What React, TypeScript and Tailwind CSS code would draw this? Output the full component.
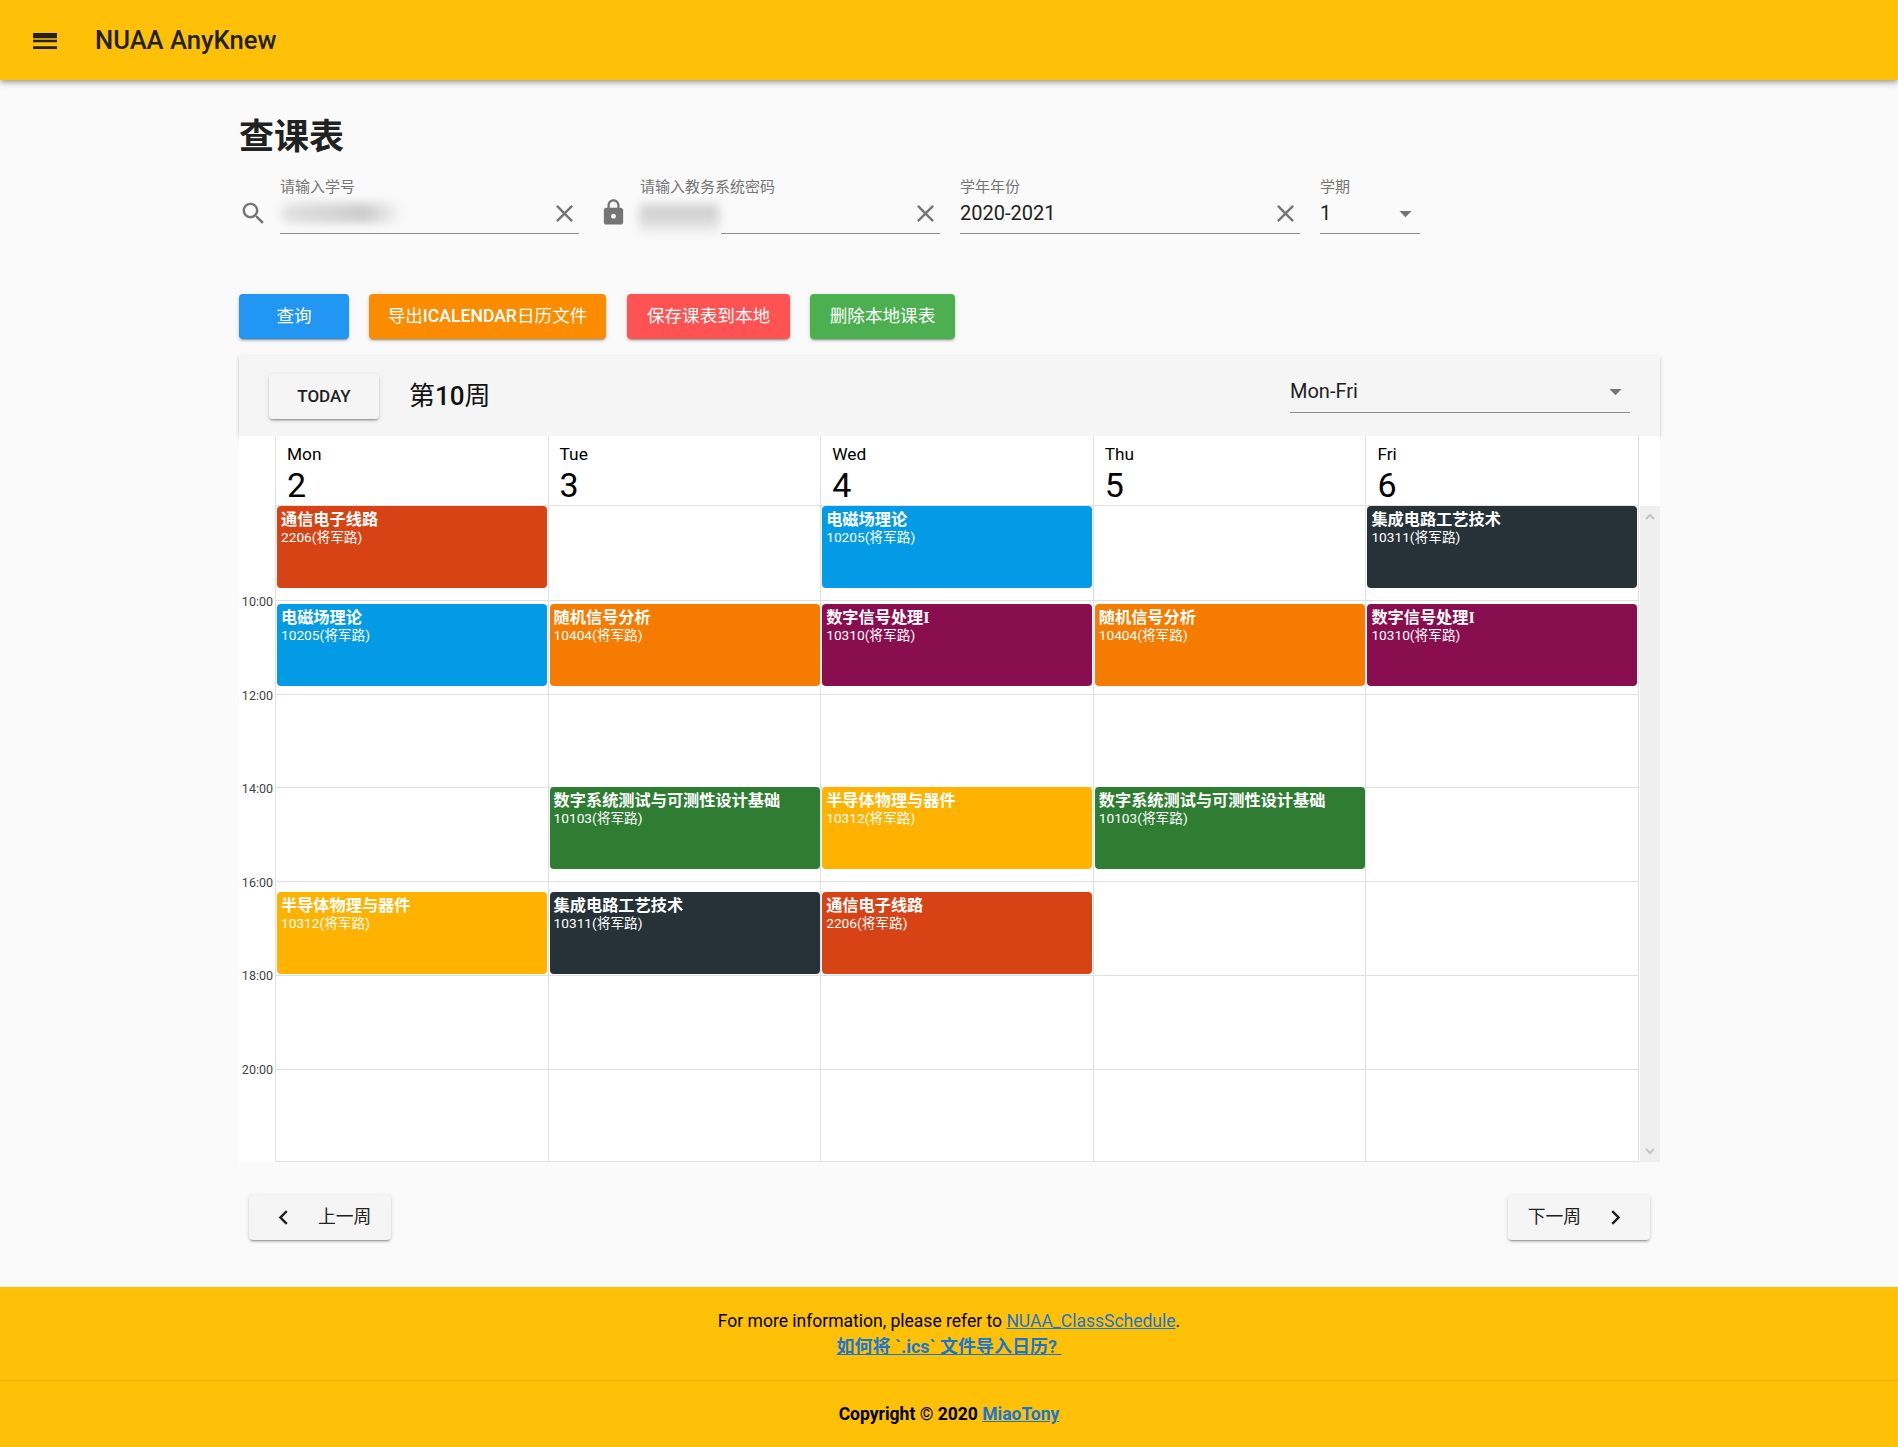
import type { ReactNode } from "react";

interface Course {
  title: string;
  room: string;
  color: string;
}

const red = { title: "通信电子线路", room: "2206(将军路)", color: "bg-[#d84315]" };
const field = { title: "电磁场理论", room: "10205(将军路)", color: "bg-[#039be5]" };
const random = { title: "随机信号分析", room: "10404(将军路)", color: "bg-[#f57c00]" };
const dsp = { title: "数字信号处理I", room: "10310(将军路)", color: "bg-[#880e4f]" };
const test = { title: "数字系统测试与可测性设计基础", room: "10103(将军路)", color: "bg-[#2e7d32]" };
const semi = { title: "半导体物理与器件", room: "10312(将军路)", color: "bg-[#ffb300]" };
const ic = { title: "集成电路工艺技术", room: "10311(将军路)", color: "bg-[#263238]" };

const days: { name: string; date: number; courses: (Course | null)[] }[] = [
  { name: "Mon", date: 2, courses: [red, field, null, null, semi, null, null] },
  { name: "Tue", date: 3, courses: [null, random, null, test, ic, null, null] },
  { name: "Wed", date: 4, courses: [field, dsp, null, semi, red, null, null] },
  { name: "Thu", date: 5, courses: [null, random, null, test, null, null, null] },
  { name: "Fri", date: 6, courses: [ic, dsp, null, null, null, null, null] },
];

// row heights and where the course card starts inside each row
const rows = [
  "h-[95px] pt-0",
  "h-[94px] pt-[3px]",
  "h-[93px] pt-0",
  "h-[94px] pt-0 [&>div]:-translate-y-px",
  "h-[94px] pt-[10px]",
  "h-[94px] pt-0",
  "h-[92px] pt-0",
];
const times = ["10:00", "12:00", "14:00", "16:00", "18:00", "20:00"];

const raised = "shadow-[0_3px_1px_-2px_rgba(0,0,0,0.2),0_2px_2px_0_rgba(0,0,0,0.14),0_1px_5px_0_rgba(0,0,0,0.12)]";

function Icon({ d, className }: { d: string; className: string }) {
  return (
    <svg viewBox="0 0 24 24" className={className} fill="currentColor">
      <path d={d} />
    </svg>
  );
}

const paths = {
  menu: "M3 18h18v-2H3v2zm0-5h18v-2H3v2zm0-5v2h18V6H3z",
  search:
    "M15.5 14h-.79l-.28-.27C15.41 12.59 16 11.11 16 9.5 16 5.91 13.09 3 9.5 3S3 5.91 3 9.5 5.91 16 9.5 16c1.61 0 3.09-.59 4.23-1.57l.27.28v.79l5 4.99L20.49 19l-4.99-5zm-6 0C7.01 14 5 11.99 5 9.5S7.01 5 9.5 5 14 7.01 14 9.5 11.99 14 9.5 14z",
  lock: "M18 8h-1V6c0-2.76-2.24-5-5-5S7 3.24 7 6v2H6c-1.1 0-2 .9-2 2v10c0 1.1.9 2 2 2h12c1.1 0 2-.9 2-2V10c0-1.1-.9-2-2-2zm-6 9c-1.1 0-2-.9-2-2s.9-2 2-2 2 .9 2 2-.9 2-2 2zm3.1-9H8.9V6c0-1.71 1.39-3.1 3.1-3.1 1.71 0 3.1 1.39 3.1 3.1v2z",
  close: "M19 6.41L17.59 5 12 10.59 6.41 5 5 6.41 10.59 12 5 17.59 6.41 19 12 13.41 17.59 19 19 17.59 13.41 12z",
  arrow: "M7 10l5 5 5-5z",
  left: "M15.41 7.41L14 6l-6 6 6 6 1.41-1.41L10.83 12z",
  right: "M10 6L8.59 7.41 13.17 12l-4.58 4.59L10 18l6-6z",
};

function TextField({ label, width, children, end }: { label: string; width: string; children?: ReactNode; end: string }) {
  return (
    <div className={`${width} relative h-[54px]`}>
      <div className="text-[15px] leading-[14px] text-[#757575]">{label}</div>
      <div className="flex h-[40px] items-center justify-between border-b border-[#8c8c8c] pb-px text-[20px] text-[#212121]">
        {children}
        <Icon d={end} className="ml-auto h-[29px] w-[29px] text-[#757575]" />
      </div>
    </div>
  );
}

function ActionButton({ width, color, children }: { width: string; color: string; children: ReactNode }) {
  return (
    <button className={`${width} ${color} ${raised} h-[45px] rounded text-[17.6px] text-white`}>{children}</button>
  );
}

function Event({ course }: { course: Course }) {
  return (
    <div className={`${course.color} ml-px mr-[0.5px] h-[82px] rounded px-1 pt-[4px] text-white`}>
      <div className="whitespace-nowrap font-['Liberation_Serif','Noto_Sans_CJK_SC',serif] text-[16.2px] leading-[20px] font-bold">
        {course.title}
      </div>
      <div className="whitespace-nowrap text-[13.7px] leading-[14px]">{course.room}</div>
    </div>
  );
}

export default function App() {
  return (
    <div className="min-h-screen bg-[#fafafa] font-['Roboto','Noto_Sans_CJK_SC',sans-serif]">
      <header className="flex h-20 items-center bg-[#ffc107] shadow-[0_2px_4px_-1px_rgba(0,0,0,0.2),0_4px_5px_0_rgba(0,0,0,0.14),0_1px_10px_0_rgba(0,0,0,0.12)]">
        <Icon d={paths.menu} className="mt-px ml-[29px] h-8 w-8 text-[#212121]" />
        <div className="ml-[34px] text-[25.6px] font-medium text-[#212121]">NUAA AnyKnew</div>
      </header>

      <main className="ml-[239px] w-[1421px] pt-[38px]">
        <h1 className="h-10 text-[35px] leading-10 font-bold text-[#212121]">查课表</h1>

        <div className="mt-[22px] flex">
          <div className="w-[41px] pt-[19px]">
            <Icon d={paths.search} className="h-[29px] w-[29px] text-[#757575]" />
          </div>
          <TextField label="请输入学号" width="w-[299px]" end={paths.close}>
            <div className="absolute top-[23px] left-[1px] h-[20px] w-[120px] rounded-full bg-gradient-to-r from-[#e2e2e2] via-[#cccccc] via-70% to-[#f6f6f6] blur-[5px]" />
          </TextField>
          <div className="ml-[20px] w-[41px] pt-[18px]">
            <Icon d={paths.lock} className="h-[29px] w-[29px] text-[#757575]" />
          </div>
          <TextField label="请输入教务系统密码" width="w-[300px]" end={paths.close}>
            <div className="absolute top-[23px] -left-[3px] h-[33px] w-[84px] bg-[#fafafa]" />
            <div className="absolute top-[24px] -left-[1px] h-[29px] w-[80px] rounded-md bg-gradient-to-b from-[#cfcfcf] via-[#d6d6d6] to-[#f2f2f2] blur-[5px]" />
          </TextField>
          <div className="ml-[20px]">
            <TextField label="学年年份" width="w-[340px]" end={paths.close}>
              <span>2020-2021</span>
            </TextField>
          </div>
          <div className="ml-[20px]">
            <TextField label="学期" width="w-[100px]" end={paths.arrow}>
              <span>1</span>
            </TextField>
          </div>
        </div>

        <div className="mt-[60px] flex gap-5">
          <ActionButton width="w-[110px]" color="bg-[#2196f3]">查询</ActionButton>
          <ActionButton width="w-[237px]" color="bg-[#fb8c00]">
            导出<span className="font-medium">ICALENDAR</span>日历文件
          </ActionButton>
          <div className="ml-px">
            <ActionButton width="w-[163px]" color="bg-[#ff5252]">保存课表到本地</ActionButton>
          </div>
          <ActionButton width="w-[145px]" color="bg-[#4caf50]">删除本地课表</ActionButton>
        </div>

        <section className="mt-[17px]">
          <div className={`${raised} flex h-20 items-center bg-[#f5f5f5] pl-[30px]`}>
            <button className={`${raised} h-[45px] w-[110px] rounded bg-[#f5f5f5] pt-px text-[17px] font-medium text-[#212121]`}>
              TODAY
            </button>
            <div className="ml-[30px] text-[26px] text-[#111]">
              第<span className="font-medium">10</span>周
            </div>
            <div className="mr-[30px] mb-[8px] ml-auto flex h-[41px] w-[340px] items-center justify-between border-b border-[#8c8c8c] pb-px text-[20px] text-[#212121]">
              <span>Mon-Fri</span>
              <Icon d={paths.arrow} className="h-[29px] w-[29px] text-[#757575]" />
            </div>
          </div>

          <div className="grid grid-cols-[36px_repeat(4,272.6px)_273.6px_1fr] bg-white">
            <div />
            {days.map((day, i) => (
              <div
                key={day.name}
                className={`h-[70px] border-b border-l border-[#e0e0e0] pt-[8px] pl-[11px] text-black ${i === 4 ? "border-r" : ""}`}
              >
                <div className="text-[17.3px] leading-5">{day.name}</div>
                <div className="mt-[4px] text-[34px] leading-[34px]">{day.date}</div>
              </div>
            ))}
            <div />

            <div className="bg-white pt-[88px] pr-[2px] text-right text-[12.5px] leading-4 text-[#444]">
              {times.map((t) => (
                <div key={t} className="h-[93.5px]">{t}</div>
              ))}
            </div>
            {days.map((day, i) => (
              <div key={day.name} className={`border-l border-[#e0e0e0] ${i === 4 ? "border-r" : ""}`}>
                {day.courses.map((course, row) => (
                  <div key={row} className={`border-b border-[#e0e0e0] ${rows[row]}`}>
                    {course && <Event course={course} />}
                  </div>
                ))}
              </div>
            ))}
            <div className="ml-px flex flex-col items-center justify-between bg-[#efefef] py-[7px] text-[#c4c4c4]">
              <svg viewBox="0 0 10 7" className="h-[7px] w-[10px]" fill="none" stroke="currentColor" strokeWidth="2">
                <path d="M1 6l4-4 4 4" />
              </svg>
              <svg viewBox="0 0 10 7" className="h-[7px] w-[10px]" fill="none" stroke="currentColor" strokeWidth="2">
                <path d="M1 1l4 4 4-4" />
              </svg>
            </div>
          </div>
        </section>

        <div className="mt-[33px] flex justify-between px-[10px]">
          <button className={`${raised} flex h-[45px] items-center gap-5 rounded bg-[#f5f5f5] px-5 text-[17.8px] text-[#212121]`}>
            <Icon d={paths.left} className="h-[29px] w-[29px]" />
            上一周
          </button>
          <button className={`${raised} flex h-[45px] items-center gap-5 rounded bg-[#f5f5f5] px-5 text-[17.8px] text-[#212121]`}>
            下一周
            <Icon d={paths.right} className="h-[29px] w-[29px]" />
          </button>
        </div>
      </main>

      <footer className="mt-[47px] h-[160px] bg-[#ffc107] text-center text-[17.5px] leading-[26px] text-black">
        <div className="h-[94px] border-b border-black/10 pt-[21px]">
          <div>
            For more information, please refer to <a className="text-[#1976d2] underline">NUAA_ClassSchedule</a>.
          </div>
          <div className="text-[18px]">
            <a className="font-bold whitespace-pre text-[#1976d2] underline">如何将 `.ics` 文件导入日历? </a>
          </div>
        </div>
        <div className="pt-[20px] font-bold">
          Copyright © 2020 <a className="text-[#1976d2] underline">MiaoTony</a>
        </div>
      </footer>
    </div>
  );
}
